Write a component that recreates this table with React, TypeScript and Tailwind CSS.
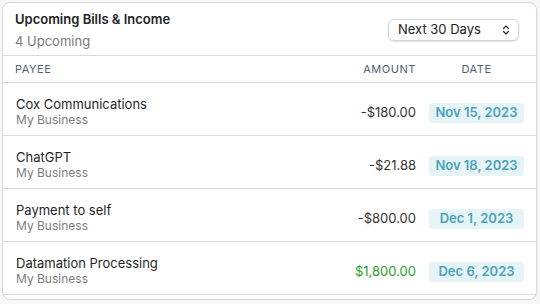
import React from 'react';
import { ChevronsUpDown } from 'lucide-react';

type Bill = {
  payee: string;
  account: string;
  amount: string;
  income?: boolean;
  date: string;
};

const bills: Bill[] = [
  { payee: 'Cox Communications', account: 'My Business', amount: '-$180.00', date: 'Nov 15, 2023' },
  { payee: 'ChatGPT', account: 'My Business', amount: '-$21.88', date: 'Nov 18, 2023' },
  { payee: 'Payment to self', account: 'My Business', amount: '-$800.00', date: 'Dec 1, 2023' },
  { payee: 'Datamation Processing', account: 'My Business', amount: '$1,800.00', income: true, date: 'Dec 6, 2023' },
];

export default function App() {
  return (
    <div
      className="w-[540px] h-[304px] bg-[#f7f7f7] p-[2px] pr-[3px]"
      style={{ fontFamily: 'Inter, "Liberation Sans", Arial, sans-serif' }}
    >
      <div className="h-[298px] bg-white border border-[#d6d6d6] rounded-[8px] overflow-hidden">
        <div className="flex items-start justify-between pl-[12px] pr-[17px] pt-[8px] h-[53px] border-b border-[#d9d9d9]">
          <div>
            <h3 className="text-[13px] font-semibold text-[#222] leading-[16px]">Upcoming Bills &amp; Income</h3>
            <p className="text-[13px] text-[#7a7a7a] leading-[16px] mt-[6px]">4 Upcoming</p>
          </div>
          <button className="mt-[8px] w-[131px] h-[22px] flex items-center justify-between pl-[9px] pr-[6px] text-[13px] text-[#222] bg-white border border-[#d4d4d4] rounded-[6px] shadow-[0_1px_2px_rgba(0,0,0,0.12)]">
            <span>Next 30 Days</span>
            <ChevronsUpDown className="w-[12px] h-[12px] text-[#333]" strokeWidth={2.5} />
          </button>
        </div>

        <div className="flex items-center h-[27px] pl-[12px] pr-[12px] border-b border-[#d9d9d9] text-[11px] tracking-[0.05em] text-[#4f5f75]">
          <div className="flex-1">PAYEE</div>
          <div className="w-[100px] text-right">AMOUNT</div>
          <div className="w-[95px] ml-[13px] text-center">DATE</div>
        </div>

        {bills.map((b) => (
          <div
            key={b.payee}
            className="flex items-center h-[53px] pl-[13px] pr-[12px] border-b border-[#d9d9d9]"
          >
            <div className="flex-1 pt-[6px]">
              <div className="text-[13px] text-[#1f1f1f] leading-[15px]">{b.payee}</div>
              <div className="text-[12px] text-[#7d7d7d] leading-[15px]">{b.account}</div>
            </div>
            <div
              className={`w-[100px] text-right text-[13px] pt-[7px] ${b.income ? 'text-[#2aa02a]' : 'text-[#333]'}`}
            >
              {b.amount}
            </div>
            <div className="w-[95px] ml-[13px] h-[20px] mt-[7px] flex items-center justify-center rounded-[3px] bg-[#e6f4f7] text-[13px] font-semibold text-[#4aa3bb]">
              {b.date}
            </div>
          </div>
        ))}
      </div>
    </div>
  );
}
